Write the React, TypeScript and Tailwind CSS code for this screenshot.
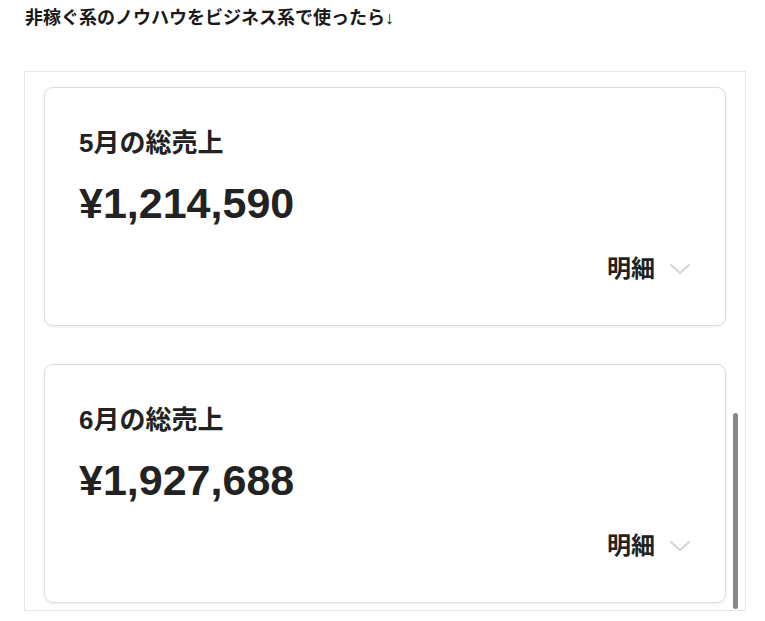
const font = { fontFamily: '"Liberation Sans", "Noto Sans CJK JP", sans-serif' };

const ChevronDown = () => (
  <svg width="22" height="12" viewBox="0 0 22 12" fill="none" className="ml-[14px]">
    <path d="M2 2 L11 10 L20 2" stroke="#d4d4d4" strokeWidth="2" strokeLinecap="round" strokeLinejoin="round" />
  </svg>
);

const SalesCard = ({ month, amount }: { month: string; amount: string }) => {
  return (
    <div className="h-[239px] shrink-0 rounded-[9px] border border-[#dcdcdc] bg-white shadow-[0_1px_3px_rgba(0,0,0,0.08)] pl-[34px] pr-[34px] pt-[38px]">
      {/* Title */}
      <p className="text-[26px] leading-[34px] font-bold text-[#222]">{month}の総売上</p>
      {/* Amount */}
      <p className="mt-[18px] text-[43px] leading-[50px] font-bold text-[#222]" style={font}>
        {amount}
      </p>
      {/* Detail toggle */}
      <div className="mt-[26px] flex items-center justify-end">
        <span className="text-[24px] leading-[30px] font-bold text-[#222]">明細</span>
        <ChevronDown />
      </div>
    </div>
  );
};

export default function App() {
  return (
    <main className="w-[765px] h-[621px] bg-white overflow-hidden" style={font}>
      {/* Lead text */}
      <p className="pl-[25px] pt-[7px] text-[18px] leading-[23px] font-bold text-[#1a1a1a]">
        非稼ぐ系のノウハウをビジネス系で使ったら↓
      </p>

      {/* Scroll box */}
      <div className="relative mt-[41px] ml-[24px] w-[722px] h-[540px] border border-[#e6e6e6] overflow-hidden">
        <div className="flex flex-col gap-[38px] px-[19px] pt-[15px]">
          <SalesCard month="5月" amount="¥1,214,590" />
          <SalesCard month="6月" amount="¥1,927,688" />
        </div>
        {/* Scrollbar thumb */}
        <div className="absolute right-[7px] bottom-[1px] w-[5px] h-[196px] rounded-full bg-[#888]" />
      </div>
    </main>
  );
}
